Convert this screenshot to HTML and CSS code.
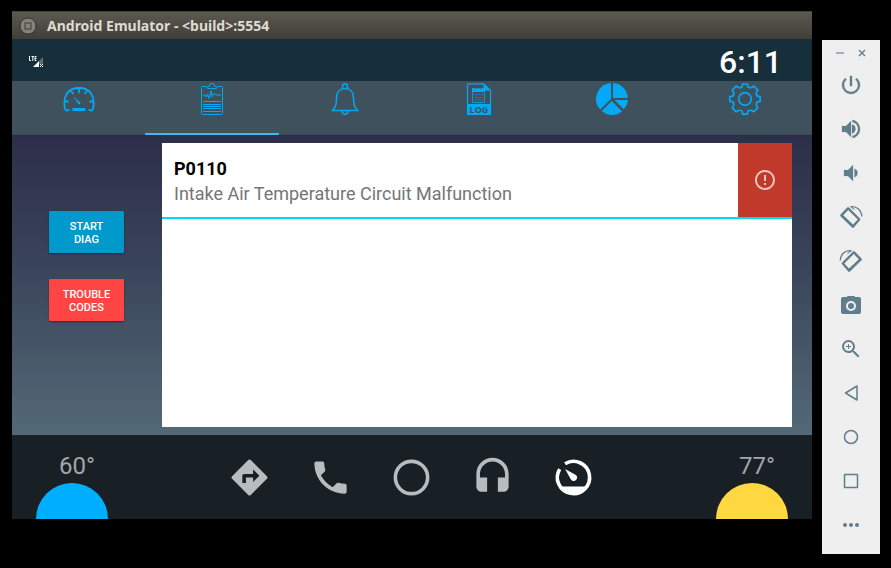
FILE: index.html
```html
<!DOCTYPE html>
<html lang="en">
<head>
<meta charset="utf-8">
<title>Android Emulator</title>
<link rel="stylesheet" href="styles.css">
</head>
<body>
<main class="emulator">
  <header class="titlebar">
    <button class="window-button" aria-label="Window menu">
      <svg width="18" height="18" viewBox="0 0 18 18"><circle cx="9" cy="9" r="8" fill="#85827b" stroke="#34332f"/><rect x="6" y="6" width="6" height="6" fill="none" stroke="#3c3b37" stroke-width="1"/></svg>
    </button>
    <h1 class="title">Android Emulator - &lt;build&gt;:5554</h1>
  </header>

  <div class="statusbar">
    <svg class="signal" width="16" height="14" viewBox="0 0 16 14" role="img" aria-label="LTE signal">
      <path d="M1.500 1v4.500H3M3.500 1.500H6M4.800 1.500V6M8.500 1.500H7v4h1.500M7 3.500h1.500" fill="none" stroke="#fff"/>
      <path d="M15 2v7h-4V6z" fill="#5d6d77"/>
      <path d="M11 6v6H5z" fill="#fff"/>
      <path d="M12 9l3 3M15 9l-3 3" stroke="#fff" fill="none"/>
    </svg>
    <time class="clock">6:11</time>
  </div>

  <nav class="tabs" aria-label="Sections">
    <button class="tab" aria-label="Dashboard">
      <svg width="32" height="32" viewBox="0 0 32 32" fill="none" stroke="currentColor" stroke-width="1.800">
        <path d="M6.500 26.500L4.500 27.500Q2.500 27.800 1.900 25.500C-.5 13 5 5 16 5s16.500 8 14.100 20.500Q29.500 27.800 27.500 27.500L25.500 26.500"/>
        <path d="M16 5v5M8 8l2.500 3M24 8l-2.500 3M1.500 18.500h4M30.500 18.500h-4"/>
        <path d="M11 14l5 6" stroke-width="1"/><path d="M13.500 17l3.800 3-1.500 1.200z" fill="currentColor" stroke-width="1"/>
        <path d="M9.500 26.500h13" stroke-width="3"/>
      </svg>
    </button>
    <button class="tab active" aria-label="Diagnostics" aria-current="page">
      <svg width="32" height="32" viewBox="0 0 32 32" fill="none" stroke="currentColor">
        <path d="M11 3.500H6.500a1 1 0 0 0-1 1V30.500a1 1 0 0 0 1 1h19a1 1 0 0 0 1-1V4.500a1 1 0 0 0-1-1H21"/>
        <path d="M11.500 5.500V4Q11.500 3.500 13.500 3V2Q13.500.5 16 .5T18.500 2V3Q20.500 3.500 20.500 4V5.500z"/>
        <path d="M7 12h2l1 2 1.500-3 1.500 4.500L15 8l1 6 2-4 1.500 2H25"/>
        <path d="M7 18.500h18M7 21.500h18M7 23.500h18M7 25.500h18M7 28.500h18"/>
      </svg>
    </button>
    <button class="tab" aria-label="Alerts">
      <svg width="32" height="32" viewBox="0 0 32 32" fill="none" stroke="currentColor" stroke-width="1.500">
        <path d="M3.500 27.500C6.500 24 7.500 22 7.500 15c0-6 3.500-9.500 8.500-9.500s8.500 3.500 8.500 9.500c0 7 1 9 4 12.500z"/>
        <path d="M13.500 5.500V3.500Q13.500.8 16 .8t2.500 2.700v2M13 27.800q.3 3.500 3 3.500t3-3.500"/>
      </svg>
    </button>
    <button class="tab" aria-label="Log">
      <svg width="32" height="32" viewBox="0 0 32 32">
        <path d="M20.500 .8H5.500q-1 0-1 1V30.500q0 1 1 1h21q1 0 1-1V7.500z" fill="none" stroke="currentColor" stroke-width="1.200"/>
        <path d="M20.500 0v6.500q0 1 1 1H28zM4 21h24v11H4z" fill="currentColor"/>
        <path d="M9.500 7h12v12.500h-12z" fill="none" stroke="currentColor" opacity=".8"/>
        <path d="M9 5h2l1 1 1-1h1l1 1 1-1h1l1 1 1-1h2.500v4H9z" fill="currentColor"/>
        <path d="M11 11.500h9M11 14.500h9M11 17h9" stroke="currentColor" stroke-width=".8" opacity=".55"/>
        <text class="log-label" x="16" y="30" text-anchor="middle">LOG</text>
      </svg>
    </button>
    <button class="tab" aria-label="Statistics">
      <svg width="32" height="32" viewBox="0 0 32 32" fill="currentColor">
        <path d="M17 0A16 16 0 0 1 32 15H17zM15 0V16L4.200 26.600A16 16 0 0 1 15 0zM18.500 17H32a16 16 0 0 1-4.300 9.300zM15.700 18L26.200 28.500a16 16 0 0 1-20.600-.4z"/>
      </svg>
    </button>
    <button class="tab" aria-label="Settings">
      <svg width="32" height="32" viewBox="-16 -16 32 32" fill="none" stroke="currentColor" stroke-width="1.700" stroke-linejoin="round">
        <path d="M-2.400-15H2.400L2.900-12.200Q4.200-11 6.100-11.300L8.900-12.900 12.700-8.900 11.300-6.100Q11-4.200 12.200-2.900L15.200-2.400V2.400L12.200 2.900Q11 4.200 11.300 6.100L12.700 8.900 8.900 12.700 6.100 11.300Q4.200 11 2.900 12.200L2.400 15.200H-2.400L-2.900 12.200Q-4.200 11-6.100 11.300L-8.900 12.700-12.700 8.900-11.300 6.100Q-11 4.200-12.200 2.900L-15.200 2.400V-2.400L-12.200-2.900Q-11-4.200-11.300-6.100L-12.700-8.900-8.900-12.900-6.100-11.300Q-4.200-11-2.900-12.200z"/>
        <circle r="6.300"/>
      </svg>
    </button>
  </nav>

  <section class="content">
    <div class="actions">
      <button class="action start">START<br>DIAG</button>
      <button class="action codes">TROUBLE<br>CODES</button>
    </div>
    <ul class="codes-list">
      <li class="code">
        <div class="code-text">
          <h2 class="code-id">P0110</h2>
          <p class="code-description">Intake Air Temperature Circuit Malfunction</p>
        </div>
        <button class="code-alert" aria-label="Details">
          <svg width="24" height="24" viewBox="0 0 24 24"><path d="M11 15h2v2h-2zm0-8h2v6h-2zm.99-5C6.470 2 2 6.480 2 12s4.470 10 9.990 10C17.520 22 22 17.520 22 12S17.520 2 11.990 2zM12 20c-4.420 0-8-3.580-8-8s3.580-8 8-8 8 3.580 8 8-3.580 8-8 8z"/></svg>
        </button>
      </li>
    </ul>
  </section>

  <footer class="dock">
    <button class="climate cool"><span>60°</span></button>
    <nav class="apps" aria-label="Apps">
      <button class="app" aria-label="Navigation"><svg viewBox="0 0 24 24"><path d="M21.710 11.290l-9-9a1 1 0 0 0-1.410 0l-9 9a1 1 0 0 0 0 1.410l9 9c.39.39 1.020.39 1.410 0l9-9a1 1 0 0 0 0-1.410zM14 14.500V12h-4v3H8v-4c0-.55.45-1 1-1h5V7.500l3.500 3.500-3.500 3.500z"/></svg></button>
      <button class="app" aria-label="Phone"><svg viewBox="0 0 24 24"><path d="M6.620 10.790c1.440 2.830 3.760 5.140 6.590 6.590l2.200-2.200c.27-.27.67-.36 1.020-.24 1.120.37 2.330.57 3.570.57.55 0 1 .45 1 1V20c0 .55-.45 1-1 1C10.610 21 3 13.390 3 4c0-.55.45-1 1-1h3.500c.55 0 1 .45 1 1 0 1.250.2 2.450.57 3.570.11.35.03.74-.25 1.020z"/></svg></button>
      <button class="app" aria-label="Home"><svg viewBox="0 0 24 24"><circle cx="12" cy="12" r="9" fill="none" stroke="currentColor" stroke-width="2"/></svg></button>
      <button class="app" aria-label="Media"><svg viewBox="0 0 24 24"><path d="M12 1c-4.970 0-9 4.030-9 9v7c0 1.660 1.340 3 3 3h3v-8H5v-2c0-3.870 3.130-7 7-7s7 3.130 7 7v2h-4v8h3c1.660 0 3-1.340 3-3v-7c0-4.970-4.030-9-9-9z"/></svg></button>
      <button class="app selected" aria-label="Car"><svg viewBox="0 0 24 24"><path d="M7.300 4.300A9 9 0 1 1 4.300 7.300" fill="none" stroke="currentColor" stroke-width="2"/><path d="M5.500 17h13l-.8 2.500Q12 23.500 6.300 19.500zM7.300 7.300l5.800 3.100a1.900 1.900 0 1 1-2.700 2.400z"/></svg></button>
    </nav>
    <button class="climate warm"><span>77°</span></button>
  </footer>
</main>

<aside class="controls" aria-label="Emulator controls">
  <div class="window-controls">
    <button aria-label="Minimize"><svg width="10" height="10" viewBox="0 0 10 10"><path d="M1 5h8" stroke="#9fb1ba" stroke-width="2"/></svg></button>
    <button aria-label="Close"><svg width="10" height="10" viewBox="0 0 10 10"><path d="M2 2l6 6M8 2L2 8" stroke="currentColor" stroke-width="1.400"/></svg></button>
  </div>
  <button class="control" aria-label="Power"><svg viewBox="0 0 24 24"><path d="M13 3h-2v10h2V3zm4.830 2.170l-1.420 1.420A6.920 6.920 0 0 1 19 12c0 3.870-3.130 7-7 7A6.995 6.995 0 0 1 7.580 6.580L6.170 5.170A8.932 8.932 0 0 0 3 12a9 9 0 0 0 18 0c0-2.740-1.230-5.180-3.170-6.830z" stroke="currentColor" stroke-width=".4"/></svg></button>
  <button class="control" aria-label="Volume up"><svg viewBox="0 0 24 24"><path d="M3 9v6h4l5 5V4L7 9H3zm13.500 3A4.500 4.500 0 0 0 13 7.500v9c2-.5 3.500-2.250 3.500-4.500zM13.500 3v2.300c3.400.5 5.500 3.540 5.500 6.700s-2.110 6.200-5.500 6.700V21c4.500-.5 7.500-4.490 7.500-9s-3-8.500-7.500-9z" stroke="currentColor" stroke-width=".2"/></svg></button>
  <button class="control" aria-label="Volume down"><svg viewBox="0 0 24 24"><path d="M18.500 12A4.500 4.500 0 0 0 15.500 7.700v8.600c1.980-.73 3-2.250 3-4.300zM5 9v6h4l5 5V4L9 9H5z" stroke="currentColor" stroke-width=".2"/></svg></button>
  <button class="control" aria-label="Rotate left"><svg viewBox="0 0 24 24"><g id="rotate"><path fill-rule="evenodd" d="M8.200 2.500q.9-.8 1.800 0L21 13.500q.8.900 0 1.800L14.800 22.500q-.9.800-1.800 0L1.500 11.300q-.8-.9 0-1.800zM9.200 5L4.200 10.200l9.800 9.200 4.700-5z"/><path d="M12 1.600C18 1 22.500 5.500 22.800 11.500" fill="none" stroke="currentColor" stroke-width="1.300"/><path d="M12 1l3.800 3.400-.4.600L11 1.800z"/></g></svg></button>
  <button class="control" aria-label="Rotate right"><svg viewBox="0 0 24 24"><use href="#rotate" transform="matrix(-1 0 0 1 24 0)"/></svg></button>
  <button class="control" aria-label="Take screenshot"><svg viewBox="0 0 24 24"><path d="M9 3L7.500 4H4c-1.100 0-2 .9-2 2v13c0 1.100.9 2 2 2h16c1.100 0 2-.9 2-2V6c0-1.100-.9-2-2-2h-3.500L15 3H9zm3 15a5 5 0 1 1 0-10 5 5 0 0 1 0 10zm0-2a3 3 0 1 0 0-6 3 3 0 0 0 0 6z" fill-rule="evenodd"/></svg></button>
  <button class="control" aria-label="Zoom"><svg viewBox="0 0 24 24"><path d="M15.500 14h-.79l-.28-.27A6.471 6.471 0 0 0 16 9.500 6.500 6.500 0 1 0 9.500 16c1.610 0 3.090-.59 4.230-1.570l.27.28v.79l5 4.990L20.490 19l-4.990-5zm-6 0C7.010 14 5 11.990 5 9.500S7.010 5 9.500 5 14 7.010 14 9.500 11.990 14 9.500 14zM12 10h-2v2H9v-2H7V9h2V7h1v2h2z"/></svg></button>
  <button class="control" aria-label="Back"><svg viewBox="0 0 24 24" class="outline"><path d="M18 5v14L6.500 12z"/></svg></button>
  <button class="control" aria-label="Home"><svg viewBox="0 0 24 24" class="outline"><circle cx="12" cy="12" r="6.500"/></svg></button>
  <button class="control" aria-label="Overview"><svg viewBox="0 0 24 24" class="outline"><rect x="5.500" y="5.500" width="13" height="13" rx=".5"/></svg></button>
  <button class="control" aria-label="More"><svg viewBox="0 0 24 24"><circle cx="6" cy="12" r="2"/><circle cx="12" cy="12" r="2"/><circle cx="18" cy="12" r="2"/></svg></button>
</aside>
</body>
</html>
```
FILE: styles.css
```css
* {
  box-sizing: border-box;
}

body {
  margin: 0;
  padding: 11px 11px 0 12px;
  display: flex;
  align-items: flex-start;
  gap: 10px;
  background: #000;
  font-family: Roboto, "Liberation Sans", sans-serif;
}

button {
  margin: 0;
  padding: 0;
  border: 0;
  background: none;
  color: inherit;
  font: inherit;
}

svg {
  display: block;
}

.emulator {
  flex: 1;
  min-width: 0;
}

/* Window title */
.titlebar {
  display: flex;
  align-items: center;
  gap: 10px;
  height: 28px;
  padding: 0 7px;
  border-top: 1px solid #45433d;
  background: linear-gradient(#5c5950, #403e39);
}

.title {
  margin: 0;
  color: #dfdbd2;
  font: bold 14px/20px "Noto Sans", "Open Sans", sans-serif;
}

/* Status bar */
.statusbar {
  display: flex;
  align-items: center;
  justify-content: space-between;
  height: 42px;
  padding: 4px 30px 0 16px;
  background: #172e3b;
}

.clock {
  color: #fff;
  font-size: 32px;
  font-weight: 500;
  line-height: 38px;
}

/* Section tabs */
.tabs {
  display: grid;
  grid-template-columns: repeat(6, 1fr);
  height: 54px;
  background: #3f515c;
  box-shadow: inset 0 -1px #374750;
  color: #03a9f4;
}

.tab {
  display: flex;
  justify-content: center;
  align-items: flex-start;
  padding-top: 2px;
}

.tab.active {
  border-bottom: 2px solid #40b9f0;
}

.log-label {
  fill: #3f515c;
  font: bold 9px "Open Sans", sans-serif;
}

/* Diagnostics */
.content {
  display: flex;
  min-height: 300px;
  padding: 8px 20px 8px 0;
  background: linear-gradient(#2d2e4b, #384258 40%, #536977);
}

.actions {
  display: flex;
  flex-direction: column;
  align-items: flex-end;
  gap: 26px;
  width: 150px;
  padding: 68px 38px 0 0;
}

.action {
  width: 75px;
  height: 42px;
  padding-top: 2px;
  border-radius: 1px;
  box-shadow: 0 1px 2px rgba(0, 0, 0, 0.4);
  color: #fff;
  font-size: 11px;
  font-weight: 500;
  line-height: 13px;
}

.start {
  background: #0099cc;
}

.codes {
  background: #ff4444;
}

.codes-list {
  flex: 1;
  margin: 0;
  padding: 0;
  background: #fff;
  list-style: none;
}

.code {
  display: flex;
  border-bottom: 2px solid #00d9f5;
}

.code-text {
  flex: 1;
  padding: 13px 12px 11px;
}

.code-id,
.code-description {
  margin: 0;
  font-size: 18px;
  line-height: 25px;
}

.code-id {
  color: #000;
}

.code-description {
  color: #757575;
}

.code-alert {
  display: grid;
  place-items: center;
  width: 54px;
  background: #c0392b;
  fill: #ecc4c0;
}

/* Bottom dock */
.dock {
  display: flex;
  justify-content: space-between;
  height: 84px;
  padding: 0 24px;
  background: #182026;
}

.climate {
  display: flex;
  flex-direction: column;
  justify-content: flex-end;
  width: 72px;
  color: #a3a6a8;
  font-size: 24px;
  line-height: 28px;
  text-align: center;
}

.climate span {
  padding: 0 0 3px 10px;
}

.climate::after {
  content: "";
  height: 36px;
  border-radius: 36px 36px 0 0;
}

.cool::after {
  background: #00aeff;
}

.warm::after {
  background: #ffd740;
}

.apps {
  display: flex;
  padding-right: 2px;
}

.app {
  display: grid;
  place-items: center;
  width: 81px;
  color: #b9bcbe;
  fill: currentColor;
}

.app svg {
  width: 43px;
  height: 43px;
}

.app.selected {
  color: #fff;
}

/* Emulator side controls */
.controls {
  width: 58px;
  margin-top: 29px;
  padding-bottom: 7px;
  background: #efefef;
  color: #607d8b;
}

.window-controls {
  display: flex;
  justify-content: center;
  gap: 12px;
  padding: 8px 0 5px;
}

.control {
  display: grid;
  place-items: center;
  width: 100%;
  height: 44px;
  fill: currentColor;
}

.control svg {
  width: 24px;
  height: 24px;
}

.control .outline {
  fill: none;
  stroke: currentColor;
  stroke-width: 1.500;
  stroke-linejoin: round;
}
```
